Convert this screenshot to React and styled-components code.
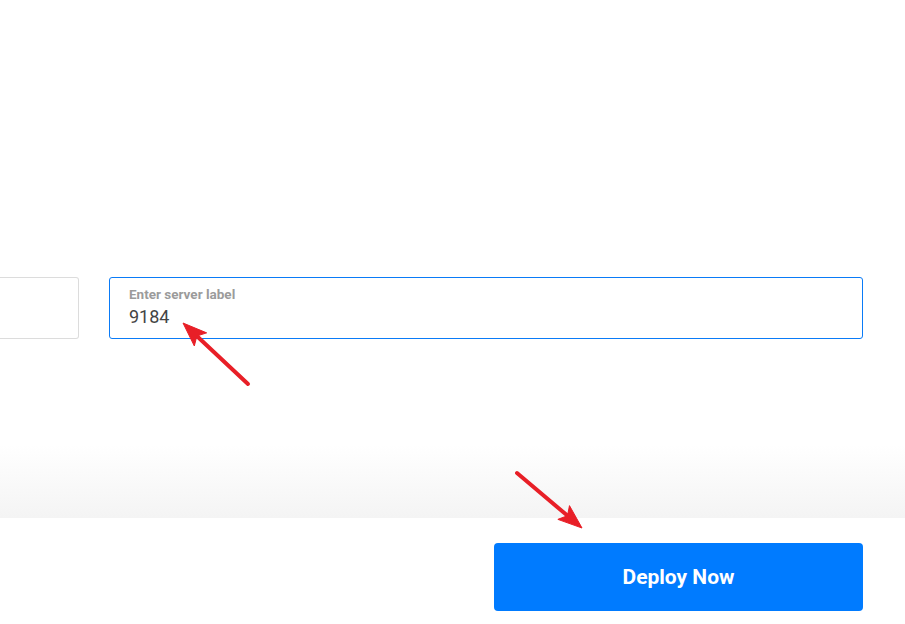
import styled, { createGlobalStyle } from 'styled-components'

const GlobalStyle = createGlobalStyle`
  html, body {
    margin: 0;
    padding: 0;
    background: #fff;
    font-family: Roboto, "Liberation Sans", Arial, sans-serif;
  }
  * { box-sizing: border-box; }
`

const Page = styled.div`
  position: relative;
  width: 905px;
  height: 624px;
  overflow: hidden;
  display: flex;
  flex-direction: column;
`

const FormArea = styled.div`
  height: 445px;
  padding: 277px 42px 0 0;
`

const FieldRow = styled.div`
  display: grid;
  grid-template-columns: 79px 1fr;
  gap: 30px;
`

const Field = styled.div`
  height: 62px;
  border: 1px solid ${p => (p.$active ? '#0a7bf7' : '#dcdcdc')};
  border-radius: 3px;
  padding: 8px 19px 0;
  display: flex;
  flex-direction: column;
  ${p => p.$cut && `
    border-left: none;
    border-top-left-radius: 0;
    border-bottom-left-radius: 0;
  `}
`

const FieldLabel = styled.span`
  font-size: 13.5px;
  font-weight: 700;
  color: #9b9b9b;
  line-height: 17px;
`

const FieldValue = styled.span`
  font-size: 18px;
  color: #444;
  line-height: 24px;
  margin-top: 2px;
`

const Shade = styled.div`
  height: 73px;
  background: linear-gradient(to bottom, #ffffff 0%, #f4f4f4 100%);
`

const Footer = styled.div`
  flex: 1;
  background: #fff;
  display: flex;
  justify-content: flex-end;
  padding: 25px 42px 0 0;
`

const DeployButton = styled.button`
  width: 369px;
  height: 68px;
  border: none;
  border-radius: 4px;
  background: #007bff;
  color: #fff;
  font-family: Roboto, "Liberation Sans", Arial, sans-serif;
  font-size: 21px;
  font-weight: 700;
  cursor: pointer;
`

const Annotations = styled.svg`
  position: absolute;
  left: 0;
  top: 0;
  pointer-events: none;
`

const Arrow = ({ tail, tip }) => {
  const dx = tip[0] - tail[0]
  const dy = tip[1] - tail[1]
  const len = Math.hypot(dx, dy)
  const ux = dx / len
  const uy = dy / len
  const headLen = 24
  const half = 9
  const bx = tip[0] - ux * headLen
  const by = tip[1] - uy * headLen
  const p1 = [bx - uy * half, by + ux * half]
  const p2 = [bx + uy * half, by - ux * half]
  const neck = [tip[0] - ux * (headLen - 4), tip[1] - uy * (headLen - 4)]
  return (
    <g fill="#e81f27" stroke="#e81f27">
      <line x1={tail[0]} y1={tail[1]} x2={neck[0]} y2={neck[1]} strokeWidth="4" strokeLinecap="round" />
      <polygon points={`${tip[0]},${tip[1]} ${p1[0]},${p1[1]} ${bx + ux * 5},${by + uy * 5} ${p2[0]},${p2[1]}`} strokeWidth="1" strokeLinejoin="round" />
    </g>
  )
}

export default function App() {
  return (
    <>
      <GlobalStyle />
      <Page>
        <FormArea>
          <FieldRow>
            <Field $cut />
            <Field $active>
              <FieldLabel>Enter server label</FieldLabel>
              <FieldValue>9184</FieldValue>
            </Field>
          </FieldRow>
        </FormArea>
        <Shade />
        <Footer>
          <DeployButton>Deploy Now</DeployButton>
        </Footer>
        <Annotations width="905" height="624" viewBox="0 0 905 624">
          <Arrow tail={[248, 384]} tip={[183, 323]} />
          <Arrow tail={[517, 473]} tip={[582, 528]} />
        </Annotations>
      </Page>
    </>
  )
}
